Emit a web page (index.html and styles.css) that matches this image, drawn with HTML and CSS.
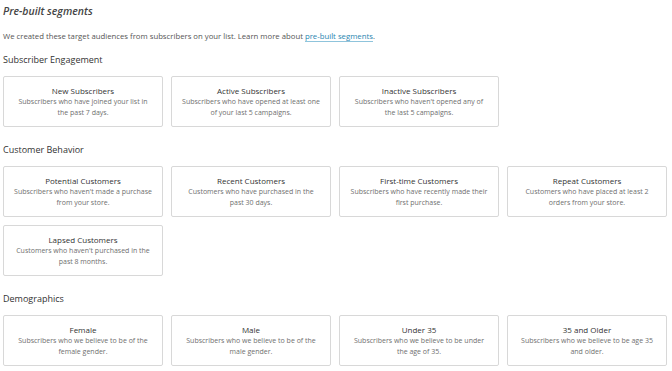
FILE: index.html
```html
<!DOCTYPE html>
<html lang="en">

<head>
    <meta charset="UTF-8">
    <meta name="viewport" content="width=device-width, initial-scale=1.0">
    <title>Pre-built segments</title>
    <link rel="stylesheet" href="styles.css">
</head>

<body>
    <div class="page">
        <h1 class="page-title">Pre-built segments</h1>
        <p class="intro">We created these target audiences from subscribers on your list. Learn more about <a href="#">pre-built segments</a>.</p>

        <section class="group">
            <h2>Subscriber Engagement</h2>
            <div class="cards">
                <div class="card">
                    <h3>New Subscribers</h3>
                    <p>Subscribers who have joined your list in the past 7 days.</p>
                </div>
                <div class="card">
                    <h3>Active Subscribers</h3>
                    <p>Subscribers who have opened at least one of your last 5 campaigns.</p>
                </div>
                <div class="card">
                    <h3>Inactive Subscribers</h3>
                    <p>Subscribers who haven't opened any of the last 5 campaigns.</p>
                </div>
            </div>
        </section>

        <section class="group">
            <h2>Customer Behavior</h2>
            <div class="cards">
                <div class="card">
                    <h3>Potential Customers</h3>
                    <p>Subscribers who haven't made a purchase from your store.</p>
                </div>
                <div class="card">
                    <h3>Recent Customers</h3>
                    <p>Customers who have purchased in the past 30 days.</p>
                </div>
                <div class="card">
                    <h3>First-time Customers</h3>
                    <p>Subscribers who have recently made their first purchase.</p>
                </div>
                <div class="card">
                    <h3>Repeat Customers</h3>
                    <p>Customers who have placed at least 2 orders from your store.</p>
                </div>
                <div class="card">
                    <h3>Lapsed Customers</h3>
                    <p>Customers who haven't purchased in the past 8 months.</p>
                </div>
            </div>
        </section>

        <section class="group">
            <h2>Demographics</h2>
            <div class="cards">
                <div class="card">
                    <h3>Female</h3>
                    <p>Subscribers who we believe to be of the female gender.</p>
                </div>
                <div class="card">
                    <h3>Male</h3>
                    <p>Subscribers who we believe to be of the male gender.</p>
                </div>
                <div class="card">
                    <h3>Under 35</h3>
                    <p>Subscribers who we believe to be under the age of 35.</p>
                </div>
                <div class="card">
                    <h3>35 and Older</h3>
                    <p>Subscribers who we believe to be age 35 and older.</p>
                </div>
            </div>
        </section>
    </div>
</body>

</html>
```

FILE: styles.css
```css
body {
    margin: 0;
    font-family: "Open Sans", "Liberation Sans", sans-serif;
    background: #fff;
    color: #444;
}

.page {
    width: 664px;
    padding: 4px 0 0 3px;
}

.page-title {
    margin: 0;
    font-size: 10.5px;
    font-style: italic;
    font-weight: 600;
    line-height: 14px;
    color: #444;
}

.intro {
    margin: 12px 0 0;
    font-size: 7.75px;
    line-height: 12px;
    color: #555;
}

.intro a {
    color: #2a86b0;
    text-decoration: none;
    border-bottom: 1px solid #8fc4dc;
}

.group {
    margin-top: 11px;
}

.group + .group {
    margin-top: 16px;
}

.group h2 {
    margin: 0 0 9px;
    font-size: 9px;
    font-weight: 400;
    line-height: 14px;
    color: #333;
}

.cards {
    display: grid;
    grid-template-columns: repeat(4, 160px);
    gap: 8px;
}

.card {
    box-sizing: border-box;
    height: 51px;
    border: 1px solid #d8d8d8;
    border-radius: 2px;
    padding: 7px 10px 0;
    text-align: center;
}

.card h3 {
    margin: 0;
    font-size: 8px;
    font-weight: 500;
    line-height: 13px;
    color: #333;
}

.card p {
    margin: 0;
    font-size: 7px;
    line-height: 10.5px;
    color: #6f6f6f;
}
```
